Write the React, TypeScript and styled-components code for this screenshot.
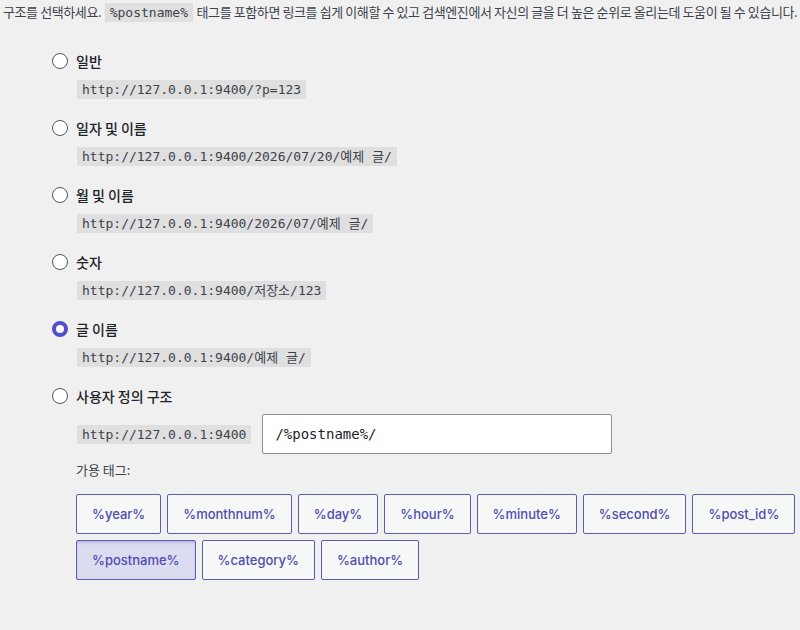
import * as React from 'react';
import { useState } from 'react';
import styled, { createGlobalStyle } from 'styled-components';

const HOST = 'http://127.0.0.1:9400';

const options = [
    { id: 'plain', label: '일반', sample: `${HOST}/?p=123` },
    { id: 'day', label: '일자 및 이름', sample: `${HOST}/2026/07/20/예제 글/` },
    { id: 'month', label: '월 및 이름', sample: `${HOST}/2026/07/예제 글/` },
    { id: 'numeric', label: '숫자', sample: `${HOST}/저장소/123` },
    { id: 'post', label: '글 이름', sample: `${HOST}/예제 글/` },
];

const tags = [
    ['%year%', '%monthnum%', '%day%', '%hour%', '%minute%', '%second%', '%post_id%'],
    ['%postname%', '%category%', '%author%'],
];

const App = () => {
    const [selected, setSelected] = useState('post');
    const [structure, setStructure] = useState('/%postname%/');

    return (
        <>
            <GlobalStyle />
            <Page>
                <Intro>
                    구조를 선택하세요. <Code>%postname%</Code> 태그를 포함하면 링크를 쉽게 이해할 수 있고 검색엔진에서 자신의 글을 더 높은 순위로 올리는데 도움이 될 수 있습니다.
                </Intro>
                <List>
                    {options.map(o => (
                        <Item key={o.id}>
                            <LabelRow>
                                <Radio checked={selected === o.id} onClick={() => setSelected(o.id)} />
                                <Label>{o.label}</Label>
                            </LabelRow>
                            <Sample><Code>{o.sample}</Code></Sample>
                        </Item>
                    ))}
                    <Item>
                        <LabelRow>
                            <Radio checked={selected === 'custom'} onClick={() => setSelected('custom')} />
                            <Label>사용자 정의 구조</Label>
                        </LabelRow>
                        <CustomRow>
                            <Code>{HOST}</Code>
                            <StructureInput value={structure} onChange={e => setStructure(e.target.value)} />
                        </CustomRow>
                        <TagsTitle>가용 태그:</TagsTitle>
                        <TagRows>
                            {tags.map((row, i) => (
                                <TagRow key={i}>
                                    {row.map(t => (
                                        <TagButton key={t} active={structure.includes(t)}>{t}</TagButton>
                                    ))}
                                </TagRow>
                            ))}
                        </TagRows>
                    </Item>
                </List>
            </Page>
        </>
    );
};

export default App;


/** styles below */

const GlobalStyle = createGlobalStyle`
    html, body {
        margin: 0;
        background: #f0f0f1;
        overflow: hidden;
    }
    body {
        font-family: "Noto Sans CJK KR", "Noto Sans", sans-serif;
        font-size: 13px;
        color: #3c434a;
    }
`;

const Page = styled.div`
    width: 800px;
    height: 630px;
    padding: 2px 0 0 3px;
    box-sizing: border-box;
    overflow: hidden;
`;

const Intro = styled.p`
    margin: 0;
    line-height: 20px;
    white-space: nowrap;
    letter-spacing: -0.4px;
`;

const Code = styled.code`
    font-family: "DejaVu Sans Mono", "Noto Sans CJK KR", monospace;
    font-size: 13px;
    line-height: 15px;
    letter-spacing: 0;
    padding: 2px 5px 2px;
    margin: 0 1px;
    background: rgba(0, 0, 0, 0.07);
    color: #3c434a;
    display: inline-block;
`;

const List = styled.div`
    display: flex;
    flex-direction: column;
    gap: 17px;
    padding: 27px 0 0 49px;
`;

const Item = styled.div`
    display: flex;
    flex-direction: column;
`;

const LabelRow = styled.div`
    display: flex;
    align-items: center;
    gap: 8px;
    height: 24px;
`;

const Radio = styled.span<{ checked: boolean }>`
    width: 16px;
    height: 16px;
    box-sizing: border-box;
    border-radius: 50%;
    background: #fff;
    border: ${p => p.checked ? '4px solid #4f4fd0' : '1px solid #50575e'};
    cursor: pointer;
`;

const Label = styled.span`
    font-size: 14px;
    font-weight: 500;
    color: #1d2327;
`;

const Sample = styled.div`
    padding: 6px 0 0 24px;
`;

const CustomRow = styled.div`
    display: flex;
    align-items: center;
    gap: 10px;
    padding: 6px 0 0 24px;
`;

const StructureInput = styled.input`
    width: 350px;
    height: 40px;
    box-sizing: border-box;
    padding: 0 12px;
    border: 1px solid #8c8f94;
    border-radius: 2px;
    background: #fff;
    font-family: "DejaVu Sans Mono", monospace;
    font-size: 14px;
    color: #1d2327;
    outline: none;
`;

const TagsTitle = styled.div`
    padding: 6px 0 0 24px;
    line-height: 20px;
`;

const TagRows = styled.div`
    display: flex;
    flex-direction: column;
    gap: 6px;
    padding: 14px 0 0 24px;
`;

const TagRow = styled.div`
    display: flex;
    gap: 6px;
`;

const TagButton = styled.button<{ active: boolean }>`
    height: 40px;
    padding: 0 15px;
    border: 1px solid #5b5bb8;
    border-radius: 2px;
    background: ${p => p.active ? '#dcdcf0' : '#f6f7f7'};
    box-shadow: ${p => p.active ? 'inset 0 2px 5px -3px rgba(40, 40, 140, 0.6)' : 'none'};
    color: #4e4eb0;
    font-family: Inter, "Noto Sans", sans-serif;
    font-size: 13px;
    font-weight: 500;
    cursor: pointer;
`;
